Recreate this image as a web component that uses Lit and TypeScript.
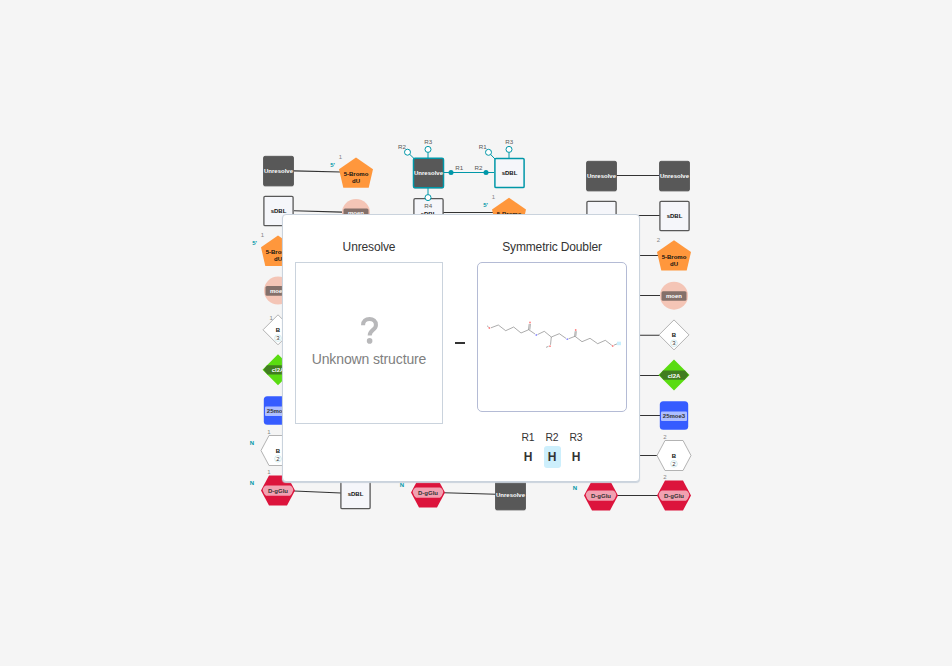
import { LitElement, html, svg, css } from "lit";
import { customElement } from "lit/decorators.js";

type Kind = "dark" | "box" | "penta" | "moen" | "diamond" | "green" | "blue" | "hex" | "red";

interface Monomer {
  kind: Kind;
  x: number;
  y: number;
  terminal?: string;
  index?: string;
  selected?: boolean;
}

const order: Kind[] = ["dark", "box", "penta", "moen", "diamond", "green", "blue", "hex", "red"];

const leftColumn: Monomer[] = [
  { kind: "dark", x: 278.5, y: 171 },
  { kind: "box", x: 278.5, y: 211 },
  { kind: "penta", x: 278, y: 251.3, terminal: "5'", index: "1" },
  { kind: "moen", x: 278, y: 290.6 },
  { kind: "diamond", x: 278, y: 329.8, index: "1" },
  { kind: "green", x: 278, y: 369.8 },
  { kind: "blue", x: 278, y: 410.5 },
  { kind: "hex", x: 278, y: 450.5, terminal: "N", index: "1" },
  { kind: "red", x: 278, y: 490.5, terminal: "N", index: "1" },
];

const middle: Monomer[] = [
  { kind: "penta", x: 356, y: 173.2, terminal: "5'", index: "1" },
  { kind: "moen", x: 356, y: 213 },
  { kind: "box", x: 355.5, y: 494 },
  { kind: "box", x: 428.5, y: 213.3 },
  { kind: "penta", x: 509, y: 213.4, terminal: "5'", index: "1" },
  { kind: "dark", x: 428.5, y: 173, selected: true },
  { kind: "box", x: 509.5, y: 173, selected: true },
  { kind: "red", x: 428, y: 492.5, terminal: "N" },
  { kind: "dark", x: 510.5, y: 495 },
];

const rightPairs: Monomer[] = [
  { kind: "dark", x: 601.5, y: 176 },
  { kind: "box", x: 601.5, y: 216 },
  { kind: "red", x: 601, y: 495.5, terminal: "N" },
  ...order.map((kind, i) => ({
    kind,
    x: i < 2 ? 674.5 : 674,
    y: [176, 216, 256, 295.7, 334.9, 375, 415.5, 455.5, 495.5][i],
    index: ["penta", "hex", "red"].includes(kind) ? "2" : undefined,
  })),
];

const bonds: [number, number, number, number][] = [
  [294, 170.9, 341, 172],
  [294, 210.8, 342, 212.1],
  [294, 491, 341, 493],
  [443, 212.5, 494, 212.5],
  [444, 492.7, 496, 494.2],
  [617, 175.5, 659, 175.5],
  [617, 495.5, 658, 495.5],
  ...[215.5, 255.5, 295.5, 335.2, 375.5, 415.5, 455.5].map(
    (y) => [600, y, 660, y] as [number, number, number, number],
  ),
];

const hexPoints = "-17,0 -9,-15 9,-15 17,0 9,15 -9,15";

function shape(kind: Kind, selected?: boolean) {
  switch (kind) {
    case "dark":
      return svg`<rect x="-15" y="-13.5" width="30" height="29.6" rx="1.5" class="shade" />
        <rect x="-15" y="-14.7" width="30" height="29.4" rx="1.5" class=${selected ? "dark picked" : "dark"} />
        <text y="2.2" class="name light">Unresolve</text>`;
    case "box":
      return svg`<rect x="-14.6" y="-14.6" width="29.2" height="29.2" rx="1.2" class=${selected ? "box picked" : "box"} />
        <text y="2.2" class="name">sDBL</text>`;
    case "penta":
      return svg`<polygon points="0,-15.7 17,-4 12.7,14.6 -12.7,14.6 -17,-4" class="orange" />
        <text y="3" class="name">5-Bromo</text><text y="10" class="name">dU</text>`;
    case "moen":
      return svg`<circle r="14" class="peach" /><rect x="-12.5" y="-4.5" width="25" height="9.6" rx="1.5" class="brown" />
        <text y="2.2" class="name light">moen</text>`;
    case "diamond":
      return svg`<polygon points="0,-15 15,0 0,15 -15,0" class="blank" /><text y="2.2" class="name">B</text>
        <circle cy="8.3" r="3.3" class="ring" /><text y="10.4" class="name thin">3</text>`;
    case "green":
      return svg`<polygon points="0,-15.5 15.5,0 0,15.5 -15.5,0" class="green" />
        <polygon points="-11,-4.5 11,-4.5 14.5,0 10.5,4.8 -10.5,4.8 -14.5,0" class="forest" />
        <text y="2.6" class="name light">cl2A</text>`;
    case "blue":
      return svg`<rect x="-14.2" y="-14.2" width="28.4" height="28.4" rx="3.5" class="blue" />
        <rect x="-13" y="-4" width="26" height="9.4" rx="1" class="veil" /><text y="2.8" class="name soft">25moe3</text>`;
    case "hex":
      return svg`<polygon points=${hexPoints} class="blank" /><text y="2.7" class="name">B</text>
        <circle cy="8.3" r="3.3" class="ring" /><text y="10.4" class="name thin">2</text>`;
    case "red":
      return svg`<polygon points=${hexPoints} class="red" />
        <path d="M-12.2-5H12.2Q15.5-3 15.2 0Q14 4 12 5.2H-12Q-14 4-15.2 0Q-15.5-3-12.2-5Z" class="veil" />
        <text y="2.4" class="name soft">D-gGlu</text>`;
  }
}

function indexOffset(kind: Kind): [number, number] {
  if (kind === "penta") return [-15.7, -14];
  if (kind === "diamond") return [-6.8, -9.8];
  return [-9, -16.5];
}

function monomer(m: Monomer) {
  const wide = m.kind === "penta";
  const [ix, iy] = indexOffset(m.kind);
  return svg`<g transform="translate(${m.x} ${m.y})">
    ${shape(m.kind, m.selected)}
    ${m.terminal ? svg`<text x=${wide ? -23.4 : -26} y=${wide ? -6 : -5.3} class="terminal">${m.terminal}</text>` : null}
    ${m.index ? svg`<text x=${ix} y=${iy} class="index">${m.index}</text>` : null}
  </g>`;
}

const openPoints: [number, number, number, number][] = [
  [407.5, 152.2, 414.5, 159],
  [428, 149.4, 428, 158],
  [428, 197.6, 428, 188],
  [488.5, 152.3, 495, 159],
  [509, 149.4, 509, 158],
];

const pointLabels: [string, number, number][] = [
  ["R2", 402, 149.3],
  ["R3", 428.3, 144.3],
  ["R1", 459.3, 170.2],
  ["R2", 478.5, 170.2],
  ["R4", 428.3, 208.3],
  ["R1", 482.8, 149.3],
  ["R3", 509.3, 144.3],
];

const atoms: [number, number, string][] = [
  [14.4, 28, "o"],
  [55, 22.5, "o"],
  [61.3, 35, "n"],
  [75, 46.2, "o"],
  [92.3, 39.2, "n"],
  [100.7, 30, "o"],
  [137.7, 46, "o"],
];

@customElement("attachment-list")
class AttachmentList extends LitElement {
  static styles = css`
    :host { display: flex; justify-content: center; margin-top: 16px; }
    .point { width: 24px; text-align: center; font-size: 10.4px; letter-spacing: -0.2px; line-height: 20px; color: #333; }
    .leaving { display: block; width: 17px; height: 22px; margin: -2px auto 0; border-radius: 3px;
      font-size: 12px; font-weight: 700; letter-spacing: 0; line-height: 22px; }
    .active { background: #cdeffc; }
  `;

  render() {
    return html`${["R1", "R2", "R3"].map(
      (r) => html`<div class="point">${r}<span class="leaving ${r === "R2" ? "active" : ""}">H</span></div>`,
    )}`;
  }
}

@customElement("bond-preview")
class BondPreview extends LitElement {
  static styles = css`
    :host { box-sizing: border-box; display: grid; grid-template-columns: 148px 34px 150px;
      width: 358px; height: 268px; padding: 24px 12px 0; background: #fff;
      border: 1px solid #cad3dd; border-radius: 4px; box-shadow: 0 1px 1px #cad3dd; color: #333; }
    .title { height: 15px; margin-bottom: 8px; font-size: 12px; letter-spacing: -0.14px; line-height: 17px;
      text-align: center; white-space: nowrap; }
    .unknown { box-sizing: border-box; height: 162px; border: 1px solid #cad3dd; padding-top: 54px;
      display: flex; flex-direction: column; align-items: center; color: #808080;
      font-size: 14px; letter-spacing: -0.13px; line-height: 18px; }
    .mark { width: 17px; height: 27px; margin-bottom: 6px; }
    .mark path { fill: none; stroke: #b8b8ba; stroke-width: 3.9; }
    .mark circle { fill: #b8b8ba; }
    .dash { width: 10px; height: 2px; margin: 103px 0 0 12px; background: #333; }
    .structure { box-sizing: border-box; height: 150px; border: 1px solid #b4bbd5; border-radius: 5px; }
    .molecule { display: block; width: 148px; height: 148px; }
    .chain { fill: none; stroke: #666; stroke-width: 0.55; }
    .o { fill: #ff8080; }
    .n { fill: #9090ff; }
    .cap { fill: #c9effd; }
  `;

  render() {
    return html`
      <section>
        <div class="title">Unresolve</div>
        <div class="unknown">
          <svg class="mark" viewBox="0 0 16 26">
            <path d="M1.8 7.9C1.8 4 4.4 2 8 2s6.2 2.1 6.2 5.6c0 5.1-6 4.6-6 10.2" />
            <circle cx="8.1" cy="23" r="2.7" />
          </svg>
          <span>Unknown structure</span>
        </div>
      </section>
      <div class="dash"></div>
      <section>
        <div class="title">Symmetric Doubler</div>
        <div class="structure">
          <svg class="molecule" viewBox="3 -37 148 148">
            <rect class="cap" x="142" y="41.7" width="4" height="3.5" />
            <path class="chain" d="M12 25.7L13.8 27.4M16 27.8L23.3 25L30.7 30.7L38.7 27L46 33L53.7 29.7L60 34M53.5 29.7L54.2 24M54.8 29.7L55.4 24M62.5 34.6L69.3 31.3L76.3 37L84.3 33.7L91 38.4M76.3 37L75.5 44.8M73.5 46.3L71 47.4M93.5 38.8L100 36.3L107 41.7L115 38.3L122.7 43.7L130.3 40.3L136.8 45.3M99.6 36.3L100.2 31.2M100.8 36.3L101.3 31.2M138.8 45.2L142 43.9" />
            ${atoms.map(([x, y, el]) => svg`<circle class=${el} cx=${x} cy=${y} r="0.9" />`)}
          </svg>
        </div>
        <attachment-list></attachment-list>
      </section>
    `;
  }
}

@customElement("app-root")
class AppRoot extends LitElement {
  static styles = css`
    :host { display: block; position: relative; width: 952px; height: 666px; overflow: hidden;
      background: #f5f5f5; font-family: "Liberation Sans", Arial, sans-serif; }
    .canvas { display: block; width: 952px; height: 666px; }
    bond-preview { position: absolute; left: 282px; top: 214px; }
    .bond { stroke: #333; stroke-width: 1.1; }
    .shade { fill: #cfcfcf; }
    .dark { fill: #585858; stroke: #505050; stroke-width: 0.8; }
    .box { fill: #f5f6fa; stroke: #585858; stroke-width: 1.3; }
    .picked { stroke: #0097a8; stroke-width: 1.5; }
    .orange { fill: #ff973c; }
    .peach { fill: #f4c5b6; }
    .brown { fill: #84706a; }
    .blank { fill: #fff; stroke: #aaa; stroke-width: 0.9; }
    .ring { fill: #fff; stroke: #bfe3e6; stroke-width: 0.7; }
    .green { fill: #5adc11; }
    .forest { fill: #417d20; }
    .blue { fill: #365cff; }
    .veil { fill: #fff; opacity: 0.6; }
    .red { fill: #dc143c; }
    .name { font-size: 6px; font-weight: 700; text-anchor: middle; fill: #111; }
    .light { fill: #fff; }
    .soft { fill: #333; }
    .thin { font-weight: 400; fill: #333; }
    .terminal { font-size: 6px; font-weight: 700; text-anchor: middle; fill: #0097a8; }
    .index { font-size: 6px; text-anchor: middle; fill: #858585; }
    .label { font-size: 6.2px; text-anchor: middle; fill: #585858; }
    .lead { stroke: #0097a8; stroke-width: 1; }
    .open { fill: #fff; stroke: #0097a8; stroke-width: 1; }
    .filled { fill: #0097a8; }
  `;

  render() {
    return html`
      <svg class="canvas" viewBox="0 0 952 666">
        ${bonds.map(([a, b, c, d]) => svg`<line class="bond" x1=${a} y1=${b} x2=${c} y2=${d} />`)}
        ${[...leftColumn, ...middle, ...rightPairs].map(monomer)}
        <line class="lead" x1="444" y1="172.5" x2="494" y2="172.5" />
        <circle class="filled" cx="451" cy="172.6" r="2.5" />
        <circle class="filled" cx="486" cy="172.6" r="2.5" />
        ${openPoints.map(
          ([x, y, tx, ty]) => svg`<line class="lead" x1=${x} y1=${y} x2=${tx} y2=${ty} />
            <circle class="open" cx=${x} cy=${y} r="3" />`,
        )}
        ${pointLabels.map(([t, x, y]) => svg`<text class="label" x=${x} y=${y}>${t}</text>`)}
      </svg>
      <bond-preview></bond-preview>
    `;
  }
}
